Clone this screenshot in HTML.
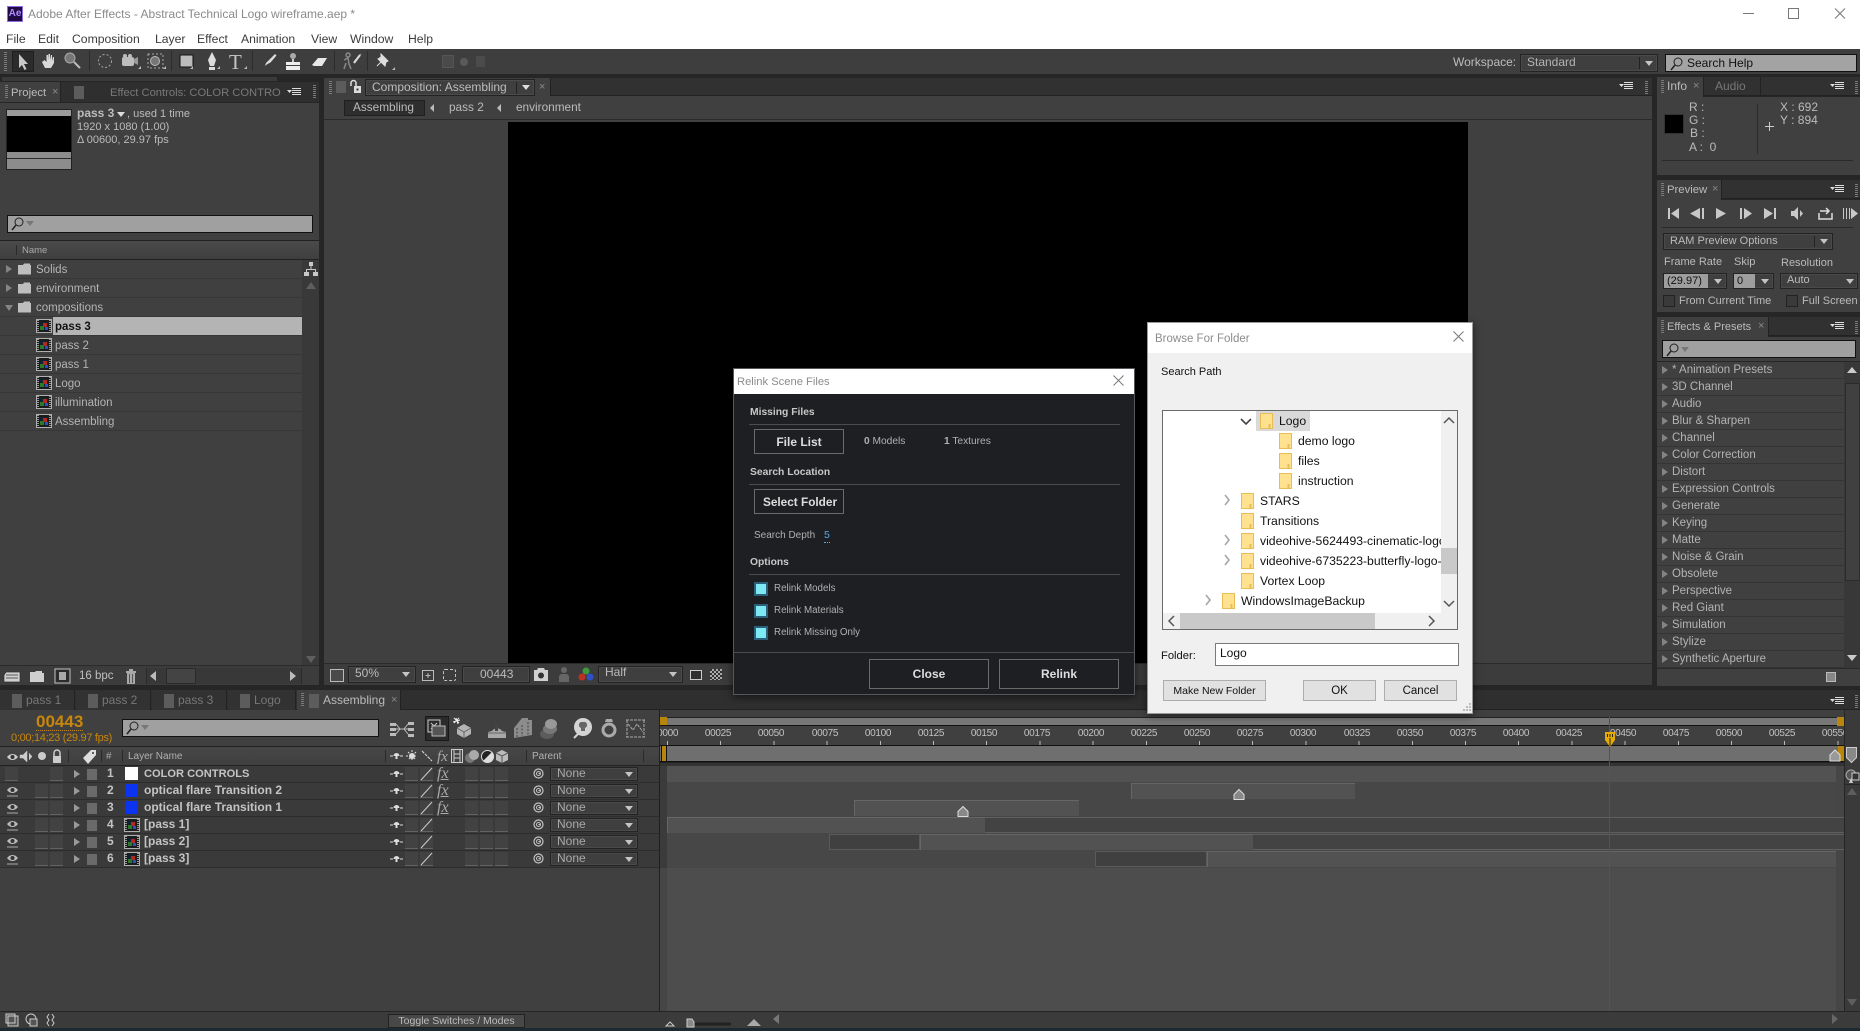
<!DOCTYPE html>
<html lang="en"><head><meta charset="utf-8"><title>Adobe After Effects</title>
<style>
*{box-sizing:border-box}
html,body{margin:0;padding:0}
body{position:relative;width:1860px;height:1031px;overflow:hidden;background:#262626;font:12px/14px "Liberation Sans",sans-serif;color:#b4b4b4}
.a{position:absolute}
.t{position:absolute;white-space:nowrap;line-height:14px}
.r{position:absolute;width:0;height:0;border-style:solid;border-width:4px 0 4px 6px;border-color:transparent transparent transparent #848484}
.d{position:absolute;width:0;height:0;border-style:solid;border-width:5px 4px 0;border-color:#c4c4c4 transparent transparent}
.g{position:absolute;width:3px;height:14px;background:repeating-linear-gradient(#7a7a7a 0 1px,transparent 1px 2px)}
.dd{position:absolute;background:#3f3f3f;border:1px solid #232323;outline:1px solid #4a4a4a;outline-offset:-2px}
.sp{position:absolute;width:1px;background:#2a2a2a}
.rw{position:absolute;left:0;width:302px;height:19px;background:#404040;border-bottom:1px solid #363636}
.rw + .r + svg + .t,.rw + .d + svg + .t,.rw + svg + .t{font-size:11.5px;margin-top:1px}
.er{position:absolute;left:1657px;width:187px;height:17px;background:#404040;border-bottom:1px solid #343434}
.er + .r + .t{font-size:11.5px;margin-top:1px}
.lr{position:absolute;left:0;width:660px;height:17px;background:#3a3a3a;border-bottom:1px solid #2d2d2d}
.b{position:absolute;width:13px;height:14px;background:#424242;border-bottom:1px solid #626262}
.lb{position:absolute;left:87px;width:10px;height:11px;background:#6a6a6a}
.n{font-weight:bold;color:#c4c4c4}
.fx{position:absolute;white-space:nowrap;line-height:14px;left:437px;font-family:'Liberation Serif',serif;font-style:italic;font-size:16px;color:#aaa;text-decoration:underline}
.tab{position:absolute;top:690px;height:20px;background:#323232;border-right:1px solid #222}
.sq{position:absolute;width:10px;height:14px;background:#5c5c5c}
.tl{position:absolute;top:727px;width:40px;text-align:center;font-size:10px;letter-spacing:-.3px;line-height:14px;color:#c2c2c2}
.tr{position:absolute;left:667px;width:1169px;height:16px}
.btn{position:absolute;border:1px solid #6a6a6a;color:#ddd;font-weight:bold;text-align:center;background:#1e1f22}
.wb{position:absolute;background:#e1e1e1;border:1px solid #adadad;text-align:center;color:#111;font-size:11.5px;line-height:21px}
.fr{position:absolute;white-space:nowrap;color:#111;font-size:12.2px;line-height:20px}
.h{font-size:10.3px;font-weight:bold;color:#c8c8c8;margin-top:1px}
.o{font-size:9.8px;color:#b0b0b0;margin-top:1px}
.s{font-size:11px;margin-top:1px}
svg{position:absolute;overflow:visible}
</style></head><body>
<svg width="0" height="0" style="left:0;top:0"><defs>
<symbol id="comp" viewBox="0 0 16 14"><rect x=".5" y=".5" width="15" height="13" fill="#1c1c1c" stroke="#b0b0b0"/><path d="M2 1v12M14 1v12" stroke="#999" stroke-width="2" stroke-dasharray="1 1"/><rect x="4" y="3" width="8" height="8" fill="#123"/><rect x="4" y="7" width="4" height="4" fill="#2a7a2a"/><rect x="7" y="4" width="4" height="4" fill="#b02a1a"/><rect x="9" y="8" width="3" height="3" fill="#2a50c0"/></symbol>
<symbol id="fold" viewBox="0 0 14 12"><path d="M0 2h5l1-1.500h6v1.500h1v9.500h-13z" fill="#bdbdbd"/></symbol>
<symbol id="wf" viewBox="0 0 13 16"><path d="M.5.500h12v15h-12z" fill="#ffe18f" stroke="#e9bd55"/><path d="M9.500 11v4.500" stroke="#e9bd55" stroke-width="2"/></symbol>
<symbol id="mn" viewBox="0 0 14 8"><path d="M0 2h5l-2.500 3z" fill="#ddd"/><path d="M5 .5h9M5 2.500h9M5 4.500h9M5 6.500h9" stroke="#ddd"/></symbol>
<symbol id="eye" viewBox="0 0 13 12"><path d="M1 5c3-4 8-4 11 0-3 4-8 4-11 0z" fill="#bbb"/><circle cx="6.500" cy="5" r="2" fill="#333"/><path d="M1 11h11" stroke="#aaa"/></symbol>
<symbol id="shy" viewBox="0 0 13 10"><path d="M0 5h3M10 5h3" stroke="#ddd"/><path d="M3.500 5a3 3 0 0 1 6 0z" fill="#ddd"/><path d="M5.500 5v3h2v-3" fill="#ddd"/></symbol>
<symbol id="sps" viewBox="0 0 11 11"><circle cx="5.500" cy="5.500" r="4.500" fill="none" stroke="#c4c4c4" stroke-width="1.200"/><circle cx="5.500" cy="5.500" r="2" fill="none" stroke="#c4c4c4"/><path d="M5.500 5.500h2" stroke="#c4c4c4"/></symbol>
</defs></svg>

<!-- title bar -->
<div class="a" style="left:0;top:0;width:1860px;height:49px;background:#fff"></div>
<div class="a" style="left:7px;top:6px;width:16px;height:16px;background:#1f0a45;border:1px solid #8d6fe0;color:#b18cff;font-weight:bold;font-size:10px;line-height:14px;text-align:center">Ae</div>
<div class="t" style="left:28px;top:7px;color:#8a8a8a;font-size:12px">Adobe After Effects - Abstract Technical Logo wireframe.aep *</div>
<div class="t" style="left:6px;top:32px;color:#3c3c3c;font-size:12.2px">File</div>
<div class="t" style="left:38px;top:32px;color:#3c3c3c;font-size:12.2px">Edit</div>
<div class="t" style="left:72px;top:32px;color:#3c3c3c;font-size:12.2px">Composition</div>
<div class="t" style="left:155px;top:32px;color:#3c3c3c;font-size:12.2px">Layer</div>
<div class="t" style="left:197px;top:32px;color:#3c3c3c;font-size:12.2px">Effect</div>
<div class="t" style="left:241px;top:32px;color:#3c3c3c;font-size:12.2px">Animation</div>
<div class="t" style="left:311px;top:32px;color:#3c3c3c;font-size:12.2px">View</div>
<div class="t" style="left:350px;top:32px;color:#3c3c3c;font-size:12.2px">Window</div>
<div class="t" style="left:408px;top:32px;color:#3c3c3c;font-size:12.2px">Help</div>
<svg width="110" height="16" style="left:1743px;top:6px"><path d="M0 7.500h11M45.500 2.500h10v10h-10zM92 2.500l10 10M102 2.500l-10 10" fill="none" stroke="#777"/></svg>

<!-- toolbar -->
<div class="a" style="left:0;top:49px;width:1860px;height:25px;background:#3e3e3e"></div>
<div class="g" style="left:4px;top:52px;height:20px"></div>
<div class="a" style="left:12px;top:51px;width:22px;height:21px;background:#2b2b2b;border:1px solid #1f1f1f"></div>
<svg width="400" height="26" style="left:0;top:49px">
<path d="M19 5v14l3-3 2.500 5 2-1-2.500-5h4z" fill="#c8c8c8"/>
<path d="M42 13l3 6h6l3-5v-6l-1 0-1 4v-6h-1l-1 5v-6h-1.500l-.5 6v-5h-1.500v7l-2-2z" fill="#d8d8d8"/>
<circle cx="70" cy="9" r="5" fill="#777" stroke="#aaa"/><path d="M74 13l6 6" stroke="#bbb" stroke-width="2"/>
<circle cx="105" cy="12" r="6.500" fill="none" stroke="#aaa" stroke-dasharray="2 2"/>
<rect x="122" y="8" width="12" height="9" rx="2" fill="#bdbdbd"/><circle cx="125" cy="7" r="2" fill="#bdbdbd"/><circle cx="130" cy="7" r="2" fill="#bdbdbd"/><path d="M134 10l4-2v8l-4-2z" fill="#999"/>
<rect x="148" y="5" width="15" height="14" fill="none" stroke="#aaa" stroke-dasharray="2 2"/><circle cx="155" cy="12" r="4.500" fill="#777" stroke="#bbb"/>
<rect x="180" y="6" width="13" height="12" fill="#bbb" stroke="#111"/>
<path d="M212 3l4 8-2 6h-4l-2-6z" fill="#ddd"/><rect x="209" y="18" width="6" height="3" fill="#ddd"/>
<text x="229" y="20" font-family="Liberation Serif" font-size="21" fill="#c4c4c4">T</text>
<path d="M275 5l1.500 1.500-6 7-3 1.500-2.500 2 1-3 2-2z" fill="#ddd"/>
<circle cx="293" cy="7" r="3" fill="#aaa"/><path d="M292 10h2v3h-2z" fill="#ccc"/><path d="M286 13h14v3h-14zM286 17h14v4h-14z" fill="#eee"/>
<path d="M312 16l6-7h9l-5 8h-8z" fill="#e8e8e8"/>
<path d="M346 6a2 2 0 1 1 0 .1M344 11l4-2 1 6 2 5M346 14l-2 6M354 13l7-8" stroke="#888" stroke-width="1.500" fill="none"/><path d="M354 14l6-8" stroke="#ddd" stroke-width="2"/>
<path d="M377 17l5-5M381 5l7 7-2 1-1 4-7-7 3-2z" stroke="#ddd" fill="#ddd"/>
<path d="M190 20h3v-3zM217 20h3v-3zM244 20h3v-3zM138 20h3v-3zM163 20h3v-3zM392 21h3v-3z" fill="#bbb"/>
<path d="M89.500 2v20M171.500 2v20M252.500 2v20M334.500 2v20M367.500 2v20" stroke="#2c2c2c"/>
</svg>
<div class="a" style="left:442px;top:55px;width:12px;height:13px;background:#4a4a4a;border:1px solid #555"></div>
<div class="a" style="left:460px;top:58px;width:8px;height:8px;background:#5a5a5a;border-radius:50%"></div>
<div class="a" style="left:476px;top:56px;width:9px;height:11px;background:#4b4b4b"></div>
<div class="t" style="left:1453px;top:55px;color:#bdbdbd">Workspace:</div>
<div class="dd" style="left:1520px;top:54px;width:138px;height:18px"></div>
<div class="t" style="left:1527px;top:55px;color:#b4b4b4">Standard</div>
<div class="sp" style="left:1639px;top:57px;height:12px;background:#222"></div>
<div class="d" style="left:1645px;top:61px"></div>
<div class="a" style="left:1665px;top:54px;width:192px;height:18px;background:#a3a3a3;border:1px solid #111"></div>
<svg width="14" height="14" style="left:1670px;top:57px"><circle cx="8" cy="5" r="4" fill="none" stroke="#222"/><path d="M5 8l-4 5" stroke="#222" stroke-width="1.500"/></svg>
<div class="t" style="left:1687px;top:56px;color:#111">Search Help</div>

<!-- project panel -->
<div class="a" style="left:2px;top:77px;width:275px;height:4px;background:#3a3a3a"></div>
<div class="a" style="left:0;top:82px;width:319px;height:20px;background:#2f2f2f"></div>
<div class="a" style="left:0;top:82px;width:61px;height:20px;background:#404040;border-right:1px solid #222"></div>
<div class="g" style="left:5px;top:85px"></div>
<div class="t" style="left:11px;top:86px;color:#bbb;font-size:11.3px">Project</div>
<div class="t" style="left:52px;top:85px;font-size:11px;color:#888">×</div>
<div class="sq" style="left:74px;top:86px;width:10px;height:13px"></div>
<div class="t" style="left:110px;top:86px;width:171px;overflow:hidden;color:#787878;font-size:11.2px">Effect Controls: COLOR CONTROLS</div>
<svg width="14" height="8" style="left:287px;top:88px"><use href="#mn"/></svg>
<div class="g" style="left:313px;top:85px"></div>
<div class="a" style="left:0;top:102px;width:319px;height:583px;background:#404040;border-top:1px solid #262626"></div>
<div class="a" style="left:6px;top:109px;width:66px;height:61px;background:#2a2a2a;border:1px solid #222"></div>
<div class="a" style="left:7px;top:110px;width:64px;height:6px;background:#9a9a9a"></div>
<div class="a" style="left:7px;top:116px;width:64px;height:36px;background:#000"></div>
<div class="a" style="left:7px;top:152px;width:64px;height:6px;background:#8c8c8c"></div>
<div class="a" style="left:7px;top:159px;width:64px;height:10px;background:#8c8c8c"></div>
<div class="t" style="left:77px;top:106px;color:#bbb"><b>pass 3</b></div>
<div class="d" style="left:117px;top:112px;border-top-color:#ddd"></div>
<div class="t s" style="left:127px;top:106px;color:#bbb">, used 1 time</div>
<div class="t s" style="left:77px;top:119px;color:#bbb">1920 x 1080 (1.00)</div>
<div class="t s" style="left:77px;top:132px;color:#bbb">Δ 00600, 29.97 fps</div>
<div class="a" style="left:7px;top:215px;width:306px;height:18px;background:#a0a0a0;border:1px solid #111"></div>
<svg width="24" height="14" style="left:11px;top:217px"><circle cx="8" cy="5" r="4" fill="none" stroke="#222"/><path d="M5 8l-4 5" stroke="#222" stroke-width="1.500"/><path d="M15 4h8l-4 5z" fill="#777"/></svg>
<div class="a" style="left:0;top:240px;width:319px;height:1px;background:#222"></div>
<div class="a" style="left:0;top:241px;width:319px;height:18px;background:linear-gradient(#4a4a4a,#3f3f3f)"></div>
<div class="sp" style="left:16px;top:245px;height:10px;background:#2a2a2a"></div>
<div class="t" style="left:22px;top:244px;font-size:9.5px;color:#aaa">Name</div>
<div class="a" style="left:0;top:259px;width:319px;height:1px;background:#222"></div>
<div class="rw" style="top:260px"></div><div class="r" style="left:6px;top:265px"></div>
<svg width="14" height="12" style="left:18px;top:263px"><use href="#fold"/></svg><div class="t" style="left:36px;top:262px">Solids</div>
<div class="rw" style="top:279px"></div><div class="r" style="left:6px;top:284px"></div>
<svg width="14" height="12" style="left:18px;top:282px"><use href="#fold"/></svg><div class="t" style="left:36px;top:281px">environment</div>
<div class="rw" style="top:298px"></div><div class="d" style="left:5px;top:305px;border-width:6px 4px 0;border-top-color:#848484"></div>
<svg width="14" height="12" style="left:18px;top:301px"><use href="#fold"/></svg><div class="t" style="left:36px;top:300px">compositions</div>
<div class="rw" style="top:317px"></div><div class="a" style="left:53px;top:317px;width:249px;height:18px;background:#b4b4b4"></div>
<svg width="16" height="14" style="left:36px;top:319px"><use href="#comp"/></svg><div class="t" style="left:55px;top:320px;color:#111;font-weight:bold;font-size:11.5px">pass 3</div>
<div class="rw" style="top:336px"></div><svg width="16" height="14" style="left:36px;top:338px"><use href="#comp"/></svg><div class="t" style="left:55px;top:338px">pass 2</div>
<div class="rw" style="top:355px"></div><svg width="16" height="14" style="left:36px;top:357px"><use href="#comp"/></svg><div class="t" style="left:55px;top:357px">pass 1</div>
<div class="rw" style="top:374px"></div><svg width="16" height="14" style="left:36px;top:376px"><use href="#comp"/></svg><div class="t" style="left:55px;top:376px">Logo</div>
<div class="rw" style="top:393px"></div><svg width="16" height="14" style="left:36px;top:395px"><use href="#comp"/></svg><div class="t" style="left:55px;top:395px">illumination</div>
<div class="rw" style="top:412px"></div><svg width="16" height="14" style="left:36px;top:414px"><use href="#comp"/></svg><div class="t" style="left:55px;top:414px">Assembling</div>
<div class="a" style="left:302px;top:260px;width:17px;height:405px;background:#393939"></div>
<svg width="14" height="16" style="left:304px;top:262px"><path d="M5 0h4v4h-4zM6.500 4h1v3h-1zM2 7h10v1h-10zM2 8h1v2h-1zM11 8h1v2h-1zM0 10h5v4h-5zM9 10h5v4h-5z" fill="#c8c8c8"/></svg>
<div class="a" style="left:306px;top:282px;width:0;height:0;border:5px solid transparent;border-bottom:7px solid #5e5e5e;border-top:0"></div>
<div class="d" style="left:306px;top:656px;border-width:7px 5px 0;border-top-color:#5e5e5e"></div>
<div class="a" style="left:0;top:665px;width:319px;height:20px;background:#3c3c3c;border-top:1px solid #2b2b2b"></div>
<svg width="70" height="16" style="left:4px;top:668px"><path d="M2 4h14v10h-16v-7zM2 7h12M2 10h12" stroke="#333" fill="#cfcfcf" stroke-width=".7"/><path d="M26 4h5l1-1h6v2h2v9h-14z" fill="#cfcfcf"/><rect x="51" y="1" width="15" height="14" fill="#2d2d2d" stroke="#c4c4c4"/><rect x="55" y="4" width="7" height="8" fill="#aaa"/></svg>
<div class="t" style="left:79px;top:669px;color:#c0c0c0;font-size:11.5px">16 bpc</div>
<svg width="12" height="16" style="left:125px;top:668px"><path d="M1 3h10v2h-10zM4 1h4v2h-4zM2 5h8v11h-8z" fill="#a8a8a8"/><path d="M4.500 6v9M7.500 6v9" stroke="#555"/></svg>
<div class="a" style="left:146px;top:668px;width:156px;height:16px;background:#383838;border-left:1px solid #2a2a2a;border-right:1px solid #2a2a2a"></div>
<div class="a" style="left:166px;top:668px;width:30px;height:16px;background:#444;border:1px solid #2a2a2a"></div>
<div class="a" style="left:150px;top:671px;border:5px solid transparent;border-right:6px solid #bbb;border-left:0"></div>
<div class="r" style="left:290px;top:671px;border-width:5px 0 5px 6px;border-left-color:#bbb"></div>

<!-- composition panel -->
<div class="a" style="left:324px;top:78px;width:1328px;height:18px;background:#404040"></div>
<div class="a" style="left:550px;top:78px;width:1102px;height:18px;background:#313131;border-bottom:1px solid #222;border-left:1px solid #222"></div>
<div class="g" style="left:329px;top:81px"></div>
<div class="sq" style="left:336px;top:81px;height:12px"></div>
<svg width="12" height="14" style="left:350px;top:80px"><path d="M1 6v-3a2.500 2.500 0 0 1 5 0v3" fill="none" stroke="#ddd" stroke-width="1.500"/><rect x="4" y="6" width="7" height="7" fill="#ddd"/><rect x="6.500" y="8.500" width="2" height="2" fill="#333"/></svg>
<div class="dd" style="left:365px;top:79px;width:170px;height:17px"></div>
<div class="t" style="left:372px;top:80px;color:#bdbdbd">Composition: Assembling</div>
<div class="sp" style="left:516px;top:82px;height:12px;background:#222"></div>
<div class="d" style="left:522px;top:85px;border-top-color:#ddd"></div>
<div class="t" style="left:539px;top:80px;font-size:11px;color:#888">×</div>
<svg width="14" height="8" style="left:1619px;top:82px"><use href="#mn"/></svg>
<div class="g" style="left:1645px;top:81px"></div>
<div class="a" style="left:324px;top:96px;width:1328px;height:24px;background:#404040;border-bottom:1px solid #2b2b2b"></div>
<div class="a" style="left:344px;top:100px;width:81px;height:16px;background:#2e2e2e;border:1px solid #202020"></div>
<div class="t" style="left:353px;top:100px;color:#bbb;font-size:11.8px">Assembling</div>
<div class="a" style="left:430px;top:104px;border:4px solid transparent;border-right:4px solid #bbb;border-left:0"></div>
<div class="t" style="left:449px;top:100px;color:#bbb;font-size:11.8px">pass 2</div>
<div class="a" style="left:497px;top:104px;border:4px solid transparent;border-right:4px solid #bbb;border-left:0"></div>
<div class="t" style="left:516px;top:100px;color:#bbb;font-size:11.8px">environment</div>
<div class="a" style="left:324px;top:120px;width:1328px;height:544px;background:#404040"></div>
<div class="a" style="left:508px;top:122px;width:960px;height:541px;background:#000"></div>
<div class="a" style="left:324px;top:663px;width:1328px;height:22px;background:#3c3c3c;border-top:1px solid #2b2b2b"></div>
<div class="a" style="left:330px;top:669px;width:14px;height:13px;border:1px solid #bbb;background:#4a4a4a"></div>
<div class="dd" style="left:348px;top:666px;width:68px;height:17px"></div>
<div class="t" style="left:355px;top:666px;color:#bbb">50%</div>
<div class="d" style="left:402px;top:672px"></div>
<svg width="14" height="14" style="left:421px;top:668px"><path d="M1.500 2.500h11v10h-11zM7 5v5M4.500 7.500h5" fill="none" stroke="#bbb"/></svg>
<div class="a" style="left:443px;top:669px;width:13px;height:12px;border:1px dashed #c4c4c4;border-radius:2px"></div>
<div class="dd" style="left:462px;top:666px;width:68px;height:17px"></div>
<div class="t" style="left:480px;top:667px;color:#bbb">00443</div>
<svg width="70" height="16" style="left:534px;top:667px"><path d="M0 3h3l1-2h6l1 2h3v11h-14z" fill="#d0d0d0"/><circle cx="7" cy="8.500" r="3" fill="#333"/><circle cx="30" cy="3" r="3" fill="#666"/><path d="M25 15v-5a3 3 0 0 1 3-3h4a3 3 0 0 1 3 3v5z" fill="#666"/><circle cx="52" cy="4" r="3.500" fill="#3c9a3c"/><circle cx="48" cy="10" r="3.500" fill="#c03020"/><circle cx="56" cy="10" r="3.500" fill="#3050c8"/></svg>
<div class="dd" style="left:598px;top:666px;width:85px;height:17px"></div>
<div class="t" style="left:605px;top:665px;color:#bbb">Half</div>
<div class="d" style="left:669px;top:672px"></div>
<div class="a" style="left:690px;top:670px;width:12px;height:10px;border:1px solid #ccc;background:#2f2f2f"></div>
<div class="a" style="left:710px;top:669px;width:12px;height:11px;background:repeating-conic-gradient(#aaa 0 25%,#333 0 50%) 0 0/4px 4px"></div>

<!-- info panel -->
<div class="a" style="left:1657px;top:77px;width:203px;height:19px;background:#313131;border-bottom:1px solid #222"></div>
<div class="a" style="left:1657px;top:77px;width:47px;height:20px;background:#404040;border-right:1px solid #222"></div>
<div class="g" style="left:1661px;top:80px"></div>
<div class="t" style="left:1667px;top:79px;color:#bbb">Info</div>
<div class="t" style="left:1693px;top:79px;font-size:11px;color:#888">×</div>
<div class="t" style="left:1715px;top:79px;color:#777">Audio</div>
<div class="sp" style="left:1760px;top:77px;height:19px;background:#222"></div>
<svg width="14" height="8" style="left:1830px;top:82px"><use href="#mn"/></svg>
<div class="g" style="left:1855px;top:81px"></div>
<div class="a" style="left:1657px;top:97px;width:203px;height:78px;background:#404040"></div>
<div class="a" style="left:1664px;top:114px;width:20px;height:20px;background:#000;border:1px solid #333"></div>
<div class="t" style="left:1689px;top:100px;color:#bbb">R :</div>
<div class="t" style="left:1689px;top:113px;color:#bbb">G :</div>
<div class="t" style="left:1690px;top:126px;color:#bbb">B :</div>
<div class="t" style="left:1689px;top:140px;color:#bbb">A :&nbsp; 0</div>
<div class="sp" style="left:1757px;top:104px;height:50px;background:#2a2a2a"></div>
<svg width="10" height="10" style="left:1765px;top:122px"><path d="M0 4.500h9M4.500 0v9" stroke="#ccc"/></svg>
<div class="t" style="left:1780px;top:100px;color:#bbb">X : 692</div>
<div class="t" style="left:1780px;top:113px;color:#bbb">Y : 894</div>
<div class="a" style="left:1662px;top:160px;width:191px;height:1px;background:#2a2a2a"></div>

<!-- preview panel -->
<div class="a" style="left:1657px;top:180px;width:203px;height:19px;background:#313131;border-bottom:1px solid #222"></div>
<div class="a" style="left:1657px;top:180px;width:65px;height:20px;background:#404040;border-right:1px solid #222"></div>
<div class="g" style="left:1661px;top:183px"></div>
<div class="t" style="left:1667px;top:183px;color:#bbb;font-size:11.3px">Preview</div>
<div class="t" style="left:1712px;top:182px;font-size:11px;color:#888">×</div>
<svg width="14" height="8" style="left:1830px;top:185px"><use href="#mn"/></svg>
<div class="g" style="left:1855px;top:184px"></div>
<div class="a" style="left:1657px;top:200px;width:203px;height:112px;background:#404040"></div>
<svg width="196" height="14" style="left:1667px;top:207px"><path d="M1 1h2v11h-2zM12 1v11l-8-5.500zM33 1v11l-10-5.500zM35 1h2v11h-2zM49 1l10 5.500-10 5.500zM73 1h2v11h-2zM77 1l8 5.500-8 5.500zM97 1l9 5.500-9 5.500zM107 1h2v11h-2zM124 4h3l4-4v13l-4-4h-3zM133 3l3 3.500-3 3.500z" fill="#c8c8c8"/><path d="M152 6v6h13v-6M153 4h9M159 1l3 3-3 3" stroke="#ddd" stroke-width="1.500" fill="none"/><path d="M176.500 1v11M179.500 1v11M182.500 1v11" stroke="#c8c8c8"/><path d="M184 1l7 5.500-7 5.500z" fill="#c8c8c8"/></svg>
<div class="a" style="left:1662px;top:227px;width:191px;height:1px;background:#2a2a2a"></div>
<div class="dd" style="left:1663px;top:233px;width:170px;height:17px"></div>
<div class="t s" style="left:1670px;top:233px;color:#bbb">RAM Preview Options</div>
<div class="sp" style="left:1814px;top:236px;height:11px;background:#222"></div>
<div class="d" style="left:1820px;top:239px"></div>
<div class="t s" style="left:1664px;top:254px;color:#bbb">Frame Rate</div>
<div class="t s" style="left:1734px;top:254px;color:#bbb">Skip</div>
<div class="t s" style="left:1781px;top:255px;color:#bbb">Resolution</div>
<div class="dd" style="left:1663px;top:273px;width:64px;height:16px"></div>
<div class="a" style="left:1664px;top:274px;width:44px;height:14px;background:#9e9e9e"></div>
<div class="t s" style="left:1667px;top:273px;color:#111">(29.97)</div>
<div class="d" style="left:1714px;top:279px"></div>
<div class="dd" style="left:1733px;top:273px;width:41px;height:16px"></div>
<div class="a" style="left:1734px;top:274px;width:21px;height:14px;background:#9e9e9e"></div>
<div class="t s" style="left:1737px;top:273px;color:#111">0</div>
<div class="d" style="left:1761px;top:279px"></div>
<div class="dd" style="left:1780px;top:273px;width:78px;height:16px"></div>
<div class="t s" style="left:1787px;top:272px;color:#bbb">Auto</div>
<div class="d" style="left:1846px;top:279px"></div>
<div class="a" style="left:1663px;top:295px;width:12px;height:12px;background:#3a3a3a;border:1px solid #222"></div>
<div class="t s" style="left:1679px;top:293px;color:#bbb">From Current Time</div>
<div class="a" style="left:1786px;top:295px;width:12px;height:12px;background:#3a3a3a;border:1px solid #222"></div>
<div class="t s" style="left:1802px;top:293px;color:#bbb">Full Screen</div>

<!-- effects panel -->
<div class="a" style="left:1657px;top:317px;width:203px;height:19px;background:#313131;border-bottom:1px solid #222"></div>
<div class="a" style="left:1657px;top:317px;width:112px;height:20px;background:#404040;border-right:1px solid #222"></div>
<div class="g" style="left:1661px;top:320px"></div>
<div class="t s" style="left:1667px;top:319px;color:#bbb">Effects &amp; Presets</div>
<div class="t" style="left:1758px;top:319px;font-size:11px;color:#888">×</div>
<svg width="14" height="8" style="left:1830px;top:322px"><use href="#mn"/></svg>
<div class="g" style="left:1855px;top:321px"></div>
<div class="a" style="left:1657px;top:337px;width:203px;height:349px;background:#404040"></div>
<div class="a" style="left:1662px;top:340px;width:194px;height:18px;background:#a0a0a0;border:1px solid #111"></div>
<svg width="24" height="14" style="left:1666px;top:343px"><circle cx="8" cy="5" r="4" fill="none" stroke="#222"/><path d="M5 8l-4 5" stroke="#222" stroke-width="1.500"/><path d="M15 4h8l-4 5z" fill="#777"/></svg>
<div class="a" style="left:1657px;top:361px;width:203px;height:1px;background:#262626"></div>
<div class="er" style="top:362px"></div><div class="r" style="left:1662px;top:366px"></div><div class="t" style="left:1672px;top:362px">* Animation Presets</div>
<div class="er" style="top:379px"></div><div class="r" style="left:1662px;top:383px"></div><div class="t" style="left:1672px;top:379px">3D Channel</div>
<div class="er" style="top:396px"></div><div class="r" style="left:1662px;top:400px"></div><div class="t" style="left:1672px;top:396px">Audio</div>
<div class="er" style="top:413px"></div><div class="r" style="left:1662px;top:417px"></div><div class="t" style="left:1672px;top:413px">Blur &amp; Sharpen</div>
<div class="er" style="top:430px"></div><div class="r" style="left:1662px;top:434px"></div><div class="t" style="left:1672px;top:430px">Channel</div>
<div class="er" style="top:447px"></div><div class="r" style="left:1662px;top:451px"></div><div class="t" style="left:1672px;top:447px">Color Correction</div>
<div class="er" style="top:464px"></div><div class="r" style="left:1662px;top:468px"></div><div class="t" style="left:1672px;top:464px">Distort</div>
<div class="er" style="top:481px"></div><div class="r" style="left:1662px;top:485px"></div><div class="t" style="left:1672px;top:481px">Expression Controls</div>
<div class="er" style="top:498px"></div><div class="r" style="left:1662px;top:502px"></div><div class="t" style="left:1672px;top:498px">Generate</div>
<div class="er" style="top:515px"></div><div class="r" style="left:1662px;top:519px"></div><div class="t" style="left:1672px;top:515px">Keying</div>
<div class="er" style="top:532px"></div><div class="r" style="left:1662px;top:536px"></div><div class="t" style="left:1672px;top:532px">Matte</div>
<div class="er" style="top:549px"></div><div class="r" style="left:1662px;top:553px"></div><div class="t" style="left:1672px;top:549px">Noise &amp; Grain</div>
<div class="er" style="top:566px"></div><div class="r" style="left:1662px;top:570px"></div><div class="t" style="left:1672px;top:566px">Obsolete</div>
<div class="er" style="top:583px"></div><div class="r" style="left:1662px;top:587px"></div><div class="t" style="left:1672px;top:583px">Perspective</div>
<div class="er" style="top:600px"></div><div class="r" style="left:1662px;top:604px"></div><div class="t" style="left:1672px;top:600px">Red Giant</div>
<div class="er" style="top:617px"></div><div class="r" style="left:1662px;top:621px"></div><div class="t" style="left:1672px;top:617px">Simulation</div>
<div class="er" style="top:634px"></div><div class="r" style="left:1662px;top:638px"></div><div class="t" style="left:1672px;top:634px">Stylize</div>
<div class="er" style="top:651px"></div><div class="r" style="left:1662px;top:655px"></div><div class="t" style="left:1672px;top:651px">Synthetic Aperture</div>
<div class="a" style="left:1844px;top:362px;width:16px;height:306px;background:#383838"></div>
<div class="a" style="left:1845px;top:383px;width:15px;height:198px;background:#404040;border:1px solid #2b2b2b"></div>
<div class="a" style="left:1847px;top:367px;border:5px solid transparent;border-bottom:6px solid #ccc;border-top:0"></div>
<div class="d" style="left:1847px;top:655px;border-width:6px 5px 0;border-top-color:#ccc"></div>
<div class="a" style="left:1657px;top:668px;width:203px;height:1px;background:#2a2a2a"></div>
<div class="a" style="left:1826px;top:672px;width:10px;height:10px;background:#888;border:1px solid #bbb"></div>

<!-- timeline -->
<div class="a" style="left:0;top:690px;width:1860px;height:20px;background:#2f2f2f;border-bottom:1px solid #222"></div>
<div class="tab" style="left:0;width:75px"></div><div class="sq" style="left:12px;top:694px"></div><div class="t" style="left:26px;top:693px;color:#777">pass 1</div>
<div class="tab" style="left:76px;width:75px"></div><div class="sq" style="left:88px;top:694px"></div><div class="t" style="left:102px;top:693px;color:#777">pass 2</div>
<div class="tab" style="left:152px;width:75px"></div><div class="sq" style="left:164px;top:694px"></div><div class="t" style="left:178px;top:693px;color:#777">pass 3</div>
<div class="tab" style="left:228px;width:68px"></div><div class="sq" style="left:240px;top:694px"></div><div class="t" style="left:254px;top:693px;color:#777">Logo</div>
<div class="tab" style="left:297px;width:104px;height:21px;background:#404040"></div><div class="g" style="left:301px;top:693px"></div><div class="sq" style="left:309px;top:694px"></div><div class="t" style="left:323px;top:693px;color:#bbb">Assembling</div><div class="t" style="left:391px;top:693px;font-size:11px;color:#888">×</div>
<svg width="14" height="8" style="left:1830px;top:697px"><use href="#mn"/></svg>
<div class="g" style="left:1855px;top:695px"></div>
<div class="a" style="left:0;top:710px;width:1860px;height:37px;background:#404040"></div>
<div class="t" style="left:36px;top:715px;color:#c8860a;font-weight:bold;font-size:17px">00443</div>
<div class="a" style="left:36px;top:730px;width:48px;height:1px;background:repeating-linear-gradient(90deg,#c8860a 0 1px,transparent 1px 2px)"></div>
<div class="t" style="left:11px;top:731px;color:#c8860a;font-size:11px;letter-spacing:-.3px">0;00;14;23 (29.97 fps)</div>
<div class="a" style="left:122px;top:719px;width:257px;height:18px;background:#a0a0a0;border:1px solid #111"></div>
<svg width="24" height="14" style="left:126px;top:721px"><circle cx="8" cy="5" r="4" fill="none" stroke="#222"/><path d="M5 8l-4 5" stroke="#222" stroke-width="1.500"/><path d="M15 4h8l-4 5z" fill="#777"/></svg>
<div class="a" style="left:425px;top:716px;width:24px;height:25px;background:#2b2b2b;border:1px solid #191919"></div>
<svg width="260" height="30" style="left:390px;top:714px">
<path d="M0 9h6v3h-6zM0 14h6v3h-6zM0 19h6v3h-6zM18 8h6v3h-6zM18 14h6v3h-6zM18 20h6v3h-6z" fill="#bbb"/><path d="M6 15h12M6 10l4 5-4 5M18 10l-4 5 4 5" stroke="#bbb" fill="none"/>
<rect x="38" y="6" width="12" height="12" fill="none" stroke="#ccc"/><path d="M41 9l6 6M47 9l-6 6" stroke="#ccc"/><rect x="42" y="12" width="13" height="10" fill="#555" stroke="#bbb"/>
<path d="M66 4l2 6M63 8l7-2M64 4l5 5M69 4l-5 5" stroke="#eee"/><path d="M74 10l7 4v6l-7 4-7-4v-6z" fill="#b4b4b4"/><path d="M67 14l7 4 7-4M74 18v6" stroke="#666" fill="none"/>
<path d="M98 24v-6l4-1a6 6 0 0 1 10 0l4 1v6z" fill="#a8a8a8"/><path d="M105 11h3v6h-3z" fill="#444"/><path d="M98 19h18" stroke="#666"/>
<path d="M124 14v10l18-3v-15l-4 0v-2h-6z" fill="#8c8c8c"/><path d="M127 14v9M132 11v11M138 8v13" stroke="#444" stroke-dasharray="2 1.500"/>
<ellipse cx="157" cy="20" rx="7" ry="5" fill="#5c5c5c"/><ellipse cx="160" cy="15" rx="7" ry="5" fill="#777"/><ellipse cx="161" cy="10" rx="6" ry="5" fill="#999"/>
<circle cx="193" cy="13" r="9" fill="#d4d4d4"/><path d="M188 20l-4 4" stroke="#d4d4d4" stroke-width="2"/><path d="M193 8a3 3 0 0 0-2 6v3h4v-3a3 3 0 0 0-2-6z" fill="#666"/>
<circle cx="219" cy="16" r="6" fill="none" stroke="#aaa" stroke-width="3"/><path d="M216 5h6l1 3h-8z" fill="#aaa"/>
<path d="M236 6h19M236 23h19M237 6v17M254 6v17M238 10l5 6 4-6 6 8" fill="none" stroke="#aaa" stroke-dasharray="3 1"/>
</svg>
<div class="a" style="left:0;top:746px;width:660px;height:1px;background:#222"></div>
<div class="a" style="left:0;top:747px;width:660px;height:18px;background:linear-gradient(#474747,#3f3f3f)"></div>
<div class="a" style="left:0;top:765px;width:660px;height:1px;background:#222"></div>
<svg width="13" height="12" style="left:6px;top:752px"><path d="M1 5c3-4 8-4 11 0-3 4-8 4-11 0z" fill="#ccc"/><circle cx="6.500" cy="5" r="2" fill="#333"/></svg>
<svg width="14" height="14" style="left:20px;top:750px"><path d="M0 5h3l4-4v11l-4-4h-3zM9 3l3 3.500-3 3.500" fill="#ccc" stroke="#ccc" stroke-width=".5"/></svg>
<div class="a" style="left:38px;top:752px;width:8px;height:8px;background:#ccc;border-radius:50%"></div>
<svg width="10" height="13" style="left:52px;top:750px"><path d="M2 6v-3a3 3 0 0 1 6 0v3" fill="none" stroke="#ccc" stroke-width="1.500"/><rect x="1" y="6" width="8" height="7" fill="#ccc"/></svg>
<div class="sp" style="left:68px;top:750px;height:12px"></div>
<svg width="14" height="14" style="left:83px;top:750px"><path d="M0 8l8-8h5v5l-8 9z" fill="#ddd"/><circle cx="10" cy="3" r="1" fill="#333"/></svg>
<div class="sp" style="left:101px;top:750px;height:12px"></div>
<div class="t" style="left:106px;top:750px;font-size:10px;color:#aaa">#</div>
<div class="sp" style="left:122px;top:750px;height:12px"></div>
<div class="t" style="left:128px;top:750px;font-size:10px;color:#b0b0b0">Layer Name</div>
<div class="sp" style="left:385px;top:750px;height:12px"></div>
<svg width="13" height="10" style="left:390px;top:751px"><use href="#shy"/></svg>
<svg width="12" height="12" style="left:406px;top:750px"><circle cx="6" cy="6" r="3" fill="#ddd"/><path d="M6 0v12M0 6h12M2 2l8 8M10 2l-8 8" stroke="#ddd" stroke-dasharray="2 2"/></svg>
<svg width="12" height="12" style="left:421px;top:750px"><path d="M1 1l10 10" stroke="#ddd" stroke-dasharray="3 1"/></svg>
<div class="t" style="left:437px;top:750px;font-family:'Liberation Serif',serif;font-style:italic;font-size:15px;color:#aaa">fx</div>
<svg width="12" height="14" style="left:451px;top:749px"><path d="M.5.500h11v13h-11zM3 1v12M9 1v12M3 5h6M3 9h6" fill="none" stroke="#ccc"/></svg>
<svg width="14" height="13" style="left:465px;top:750px"><circle cx="5" cy="8" r="5" fill="#777"/><circle cx="9" cy="5" r="5" fill="#aaa"/></svg>
<svg width="13" height="13" style="left:481px;top:750px"><circle cx="6.500" cy="6.500" r="6" fill="#222" stroke="#ddd"/><path d="M2 11a6 6 0 0 0 9-9z" fill="#ddd"/></svg>
<svg width="12" height="13" style="left:496px;top:750px"><path d="M6 0l6 3v7l-6 3-6-3v-7z" fill="#bbb"/><path d="M0 3l6 3 6-3M6 6v7" stroke="#555" fill="none"/></svg>
<div class="sp" style="left:526px;top:750px;height:12px"></div>
<div class="t" style="left:532px;top:750px;font-size:10px;color:#b0b0b0">Parent</div>
<div class="sp" style="left:643px;top:750px;height:12px"></div>

<div class="a" style="left:0;top:868px;width:660px;height:143px;background:#404040"></div>

<!-- layer rows -->
<div class="lr" style="top:766px"></div>
<div class="b" style="left:5px;top:767px"></div><div class="b" style="left:50px;top:767px"></div>
<div class="r" style="left:74px;top:770px;border-left-color:#999"></div><div class="lb" style="top:769px"></div>
<div class="t n" style="left:107px;top:766px">1</div>
<div class="a" style="left:125px;top:767px;width:13px;height:13px;background:#fff"></div>
<div class="t n" style="left:144px;top:767px;font-size:11.1px">COLOR CONTROLS</div>
<svg width="13" height="10" style="left:390px;top:769px"><use href="#shy"/></svg><div class="b" style="left:405px;top:767px"></div>
<div class="b" style="left:420px;top:767px"></div><svg width="13" height="14" style="left:420px;top:767px"><path d="M1 13l11-12" stroke="#ccc"/></svg>
<div class="fx" style="top:767px">fx</div>
<div class="b" style="left:465px;top:767px"></div><div class="b" style="left:480px;top:767px"></div><div class="b" style="left:495px;top:767px"></div>
<svg width="11" height="11" style="left:533px;top:768px"><use href="#sps"/></svg>
<div class="dd" style="left:550px;top:767px;width:88px;height:14px"></div><div class="t" style="left:557px;top:766px;color:#aaa">None</div><div class="d" style="left:625px;top:772px"></div>

<div class="lr" style="top:783px"></div>
<svg width="13" height="12" style="left:6px;top:785px"><use href="#eye"/></svg><div class="b" style="left:35px;top:784px"></div><div class="b" style="left:50px;top:784px"></div>
<div class="r" style="left:74px;top:787px;border-left-color:#999"></div><div class="lb" style="top:786px"></div>
<div class="t n" style="left:107px;top:783px">2</div>
<div class="a" style="left:125px;top:784px;width:13px;height:13px;background:#0c33f0"></div>
<div class="t n" style="left:144px;top:783px">optical flare Transition 2</div>
<svg width="13" height="10" style="left:390px;top:786px"><use href="#shy"/></svg><div class="b" style="left:405px;top:784px"></div>
<div class="b" style="left:420px;top:784px"></div><svg width="13" height="14" style="left:420px;top:784px"><path d="M1 13l11-12" stroke="#ccc"/></svg>
<div class="fx" style="top:784px">fx</div>
<div class="b" style="left:465px;top:784px"></div><div class="b" style="left:480px;top:784px"></div><div class="b" style="left:495px;top:784px"></div>
<svg width="11" height="11" style="left:533px;top:785px"><use href="#sps"/></svg>
<div class="dd" style="left:550px;top:784px;width:88px;height:14px"></div><div class="t" style="left:557px;top:783px;color:#aaa">None</div><div class="d" style="left:625px;top:789px"></div>

<div class="lr" style="top:800px"></div>
<svg width="13" height="12" style="left:6px;top:802px"><use href="#eye"/></svg><div class="b" style="left:35px;top:801px"></div><div class="b" style="left:50px;top:801px"></div>
<div class="r" style="left:74px;top:804px;border-left-color:#999"></div><div class="lb" style="top:803px"></div>
<div class="t n" style="left:107px;top:800px">3</div>
<div class="a" style="left:125px;top:801px;width:13px;height:13px;background:#0c33f0"></div>
<div class="t n" style="left:144px;top:800px">optical flare Transition 1</div>
<svg width="13" height="10" style="left:390px;top:803px"><use href="#shy"/></svg><div class="b" style="left:405px;top:801px"></div>
<div class="b" style="left:420px;top:801px"></div><svg width="13" height="14" style="left:420px;top:801px"><path d="M1 13l11-12" stroke="#ccc"/></svg>
<div class="fx" style="top:801px">fx</div>
<div class="b" style="left:465px;top:801px"></div><div class="b" style="left:480px;top:801px"></div><div class="b" style="left:495px;top:801px"></div>
<svg width="11" height="11" style="left:533px;top:802px"><use href="#sps"/></svg>
<div class="dd" style="left:550px;top:801px;width:88px;height:14px"></div><div class="t" style="left:557px;top:800px;color:#aaa">None</div><div class="d" style="left:625px;top:806px"></div>

<div class="lr" style="top:817px"></div>
<svg width="13" height="12" style="left:6px;top:819px"><use href="#eye"/></svg><div class="b" style="left:35px;top:818px"></div><div class="b" style="left:50px;top:818px"></div>
<div class="r" style="left:74px;top:821px;border-left-color:#999"></div><div class="lb" style="top:820px"></div>
<div class="t n" style="left:107px;top:817px">4</div>
<svg width="16" height="14" style="left:124px;top:818px"><use href="#comp"/></svg>
<div class="t n" style="left:144px;top:817px">[pass 1]</div>
<svg width="13" height="10" style="left:390px;top:820px"><use href="#shy"/></svg><div class="b" style="left:405px;top:818px"></div>
<div class="b" style="left:420px;top:818px"></div><svg width="13" height="14" style="left:420px;top:818px"><path d="M1 13l11-12" stroke="#ccc"/></svg>
<div class="b" style="left:465px;top:818px"></div><div class="b" style="left:480px;top:818px"></div><div class="b" style="left:495px;top:818px"></div>
<svg width="11" height="11" style="left:533px;top:819px"><use href="#sps"/></svg>
<div class="dd" style="left:550px;top:818px;width:88px;height:14px"></div><div class="t" style="left:557px;top:817px;color:#aaa">None</div><div class="d" style="left:625px;top:823px"></div>

<div class="lr" style="top:834px"></div>
<svg width="13" height="12" style="left:6px;top:836px"><use href="#eye"/></svg><div class="b" style="left:35px;top:835px"></div><div class="b" style="left:50px;top:835px"></div>
<div class="r" style="left:74px;top:838px;border-left-color:#999"></div><div class="lb" style="top:837px"></div>
<div class="t n" style="left:107px;top:834px">5</div>
<svg width="16" height="14" style="left:124px;top:835px"><use href="#comp"/></svg>
<div class="t n" style="left:144px;top:834px">[pass 2]</div>
<svg width="13" height="10" style="left:390px;top:837px"><use href="#shy"/></svg><div class="b" style="left:405px;top:835px"></div>
<div class="b" style="left:420px;top:835px"></div><svg width="13" height="14" style="left:420px;top:835px"><path d="M1 13l11-12" stroke="#ccc"/></svg>
<div class="b" style="left:465px;top:835px"></div><div class="b" style="left:480px;top:835px"></div><div class="b" style="left:495px;top:835px"></div>
<svg width="11" height="11" style="left:533px;top:836px"><use href="#sps"/></svg>
<div class="dd" style="left:550px;top:835px;width:88px;height:14px"></div><div class="t" style="left:557px;top:834px;color:#aaa">None</div><div class="d" style="left:625px;top:840px"></div>

<div class="lr" style="top:851px"></div>
<svg width="13" height="12" style="left:6px;top:853px"><use href="#eye"/></svg><div class="b" style="left:35px;top:852px"></div><div class="b" style="left:50px;top:852px"></div>
<div class="r" style="left:74px;top:855px;border-left-color:#999"></div><div class="lb" style="top:854px"></div>
<div class="t n" style="left:107px;top:851px">6</div>
<svg width="16" height="14" style="left:124px;top:852px"><use href="#comp"/></svg>
<div class="t n" style="left:144px;top:851px">[pass 3]</div>
<svg width="13" height="10" style="left:390px;top:854px"><use href="#shy"/></svg><div class="b" style="left:405px;top:852px"></div>
<div class="b" style="left:420px;top:852px"></div><svg width="13" height="14" style="left:420px;top:852px"><path d="M1 13l11-12" stroke="#ccc"/></svg>
<div class="b" style="left:465px;top:852px"></div><div class="b" style="left:480px;top:852px"></div><div class="b" style="left:495px;top:852px"></div>
<svg width="11" height="11" style="left:533px;top:853px"><use href="#sps"/></svg>
<div class="dd" style="left:550px;top:852px;width:88px;height:14px"></div><div class="t" style="left:557px;top:851px;color:#aaa">None</div><div class="d" style="left:625px;top:857px"></div>

<!-- timeline right -->
<div class="a" style="left:660px;top:710px;width:184px;height:7px;background:#404040"></div>
<div class="a" style="left:660px;top:717px;width:1184px;height:9px;background:#777;border-top:1px solid #222;border-bottom:1px solid #111"></div>
<div class="a" style="left:660px;top:717px;width:7px;height:8px;background:#b8860b"></div>
<div class="a" style="left:1837px;top:717px;width:7px;height:9px;background:#b8860b"></div>
<div class="a" style="left:660px;top:726px;width:1184px;height:20px;background:#404040;border-bottom:1px solid #111;overflow:hidden"></div>
<div class="a" style="left:667px;top:741px;width:1172px;height:4px;background:repeating-linear-gradient(90deg,#bbb 0 1px,transparent 1px 53.2px)"></div>
<div class="a" style="left:660px;top:726px;width:184px;height:15px;overflow:hidden"><div class="tl" style="left:-15px;top:1px">00000</div></div>
<div class="tl" style="left:698px">00025</div><div class="tl" style="left:751px">00050</div><div class="tl" style="left:805px">00075</div><div class="tl" style="left:858px">00100</div><div class="tl" style="left:911px">00125</div><div class="tl" style="left:964px">00150</div><div class="tl" style="left:1017px">00175</div><div class="tl" style="left:1071px">00200</div><div class="tl" style="left:1124px">00225</div><div class="tl" style="left:1177px">00250</div><div class="tl" style="left:1230px">00275</div><div class="tl" style="left:1283px">00300</div><div class="tl" style="left:1337px">00325</div><div class="tl" style="left:1390px">00350</div><div class="tl" style="left:1443px">00375</div><div class="tl" style="left:1496px">00400</div><div class="tl" style="left:1549px">00425</div><div class="tl" style="left:1603px">00450</div><div class="tl" style="left:1656px">00475</div><div class="tl" style="left:1709px">00500</div><div class="tl" style="left:1762px">00525</div>
<div class="a" style="left:1815px;top:726px;width:29px;height:15px;overflow:hidden"><div class="tl" style="left:0;top:1px">00550</div></div>
<div class="a" style="left:660px;top:746px;width:1184px;height:16px;background:#6f6f6f;border-bottom:1px solid #111"></div>
<div class="a" style="left:661px;top:746px;width:6px;height:15px;background:#b8860b;border-left:1px solid #111;border-right:1px solid #111"></div>
<div class="a" style="left:1838px;top:746px;width:6px;height:15px;background:#b8860b"></div>
<svg width="10" height="11" style="left:1830px;top:750px"><path d="M5 0l5 5v6h-10v-6z" fill="#999" stroke="#ddd"/></svg>
<div class="a" style="left:660px;top:762px;width:1184px;height:4px;background:#333;border-top:1px solid #222"></div>
<div class="a" style="left:660px;top:766px;width:1176px;height:245px;background:#4d4d4d"></div>
<div class="a" style="left:660px;top:766px;width:1176px;height:102px;background:#474747"></div>
<div class="a" style="left:660px;top:868px;width:7px;height:143px;background:#464646"></div>
<div class="a" style="left:660px;top:766px;width:7px;height:102px;background:#3b3b3b"></div>
<div class="a" style="left:659px;top:710px;width:1px;height:302px;background:#202020"></div>
<div class="a" style="left:1836px;top:766px;width:8px;height:245px;background:#464646"></div>
<div class="tr" style="top:766px;background:#525252"></div>
<div class="a" style="left:1131px;top:783px;width:224px;height:16px;background:#525252;border-top:1px solid #666;border-left:1px solid #666"></div>
<div class="a" style="left:854px;top:800px;width:225px;height:16px;background:#525252;border-top:1px solid #666;border-left:1px solid #666"></div>
<svg width="12" height="11" style="left:1233px;top:789px"><path d="M6 .5l5 5v5h-10v-5z" fill="#888" stroke="#ddd"/></svg>
<svg width="12" height="11" style="left:957px;top:806px"><path d="M6 .5l5 5v5h-10v-5z" fill="#888" stroke="#ddd"/></svg>
<div class="a" style="left:667px;top:817px;width:318px;height:16px;background:#525252;border-top:1px solid #666;border-left:1px solid #666"></div>
<div class="a" style="left:985px;top:817px;width:859px;height:16px;background:#434343;border-top:1px solid #5f5f5f;border-bottom:1px solid #5f5f5f"></div>
<div class="a" style="left:829px;top:834px;width:91px;height:16px;background:#404040;border:1px solid #5a5a5a"></div>
<div class="a" style="left:920px;top:834px;width:333px;height:16px;background:#525252;border-top:1px solid #666;border-left:1px solid #666"></div>
<div class="a" style="left:1253px;top:834px;width:591px;height:16px;background:#434343;border-top:1px solid #5f5f5f;border-bottom:1px solid #5f5f5f"></div>
<div class="a" style="left:1095px;top:851px;width:112px;height:16px;background:#404040;border:1px solid #5a5a5a"></div>
<div class="a" style="left:1207px;top:851px;width:629px;height:16px;background:#525252;border-top:1px solid #666;border-left:1px solid #666"></div>
<div class="a" style="left:1609px;top:717px;width:1px;height:294px;background:#f01212"></div>
<svg width="12" height="16" style="left:1604px;top:732px"><path d="M1 0h10v8l-5 7-5-7z" fill="#e6aa00"/><path d="M3.500 2v3M6 2v3M8.500 2v3M6 6v8" stroke="#222"/></svg>
<div class="a" style="left:1844px;top:710px;width:16px;height:301px;background:#3a3a3a;border-left:1px solid #262626"></div>
<svg width="12" height="16" style="left:1846px;top:747px"><path d="M.5.500h10v10l-5 5-5-5z" fill="#888" stroke="#ccc"/></svg>
<svg width="14" height="14" style="left:1846px;top:769px"><circle cx="5" cy="6" r="5" fill="#555" stroke="#aaa"/><rect x="6" y="4" width="7" height="7" fill="#333" stroke="#ccc"/><path d="M3 14l2-5 2 5z" fill="#ccc"/></svg>
<div class="a" style="left:1844px;top:784px;width:16px;height:1px;background:#262626"></div>
<div class="a" style="left:1847px;top:788px;border:5px solid transparent;border-bottom:7px solid #5e5e5e;border-top:0"></div>
<div class="d" style="left:1847px;top:999px;border-width:7px 5px 0;border-top-color:#5e5e5e"></div>

<!-- timeline footer -->
<div class="a" style="left:0;top:1011px;width:1860px;height:17px;background:#3b3b3b;border-top:1px solid #252525"></div>
<div class="a" style="left:0;top:1028px;width:1860px;height:3px;background:#1f2a30"></div>
<svg width="48" height="14" style="left:5px;top:1013px"><path d="M1 1h9v9h-9zM3 3h10v10h-10z" fill="#555" stroke="#ccc"/><circle cx="26" cy="6" r="5" fill="none" stroke="#ccc"/><rect x="25" y="6" width="7" height="7" fill="#555" stroke="#ccc"/><path d="M44 1l-2 3 2 3-2 3 2 3M47 1l2 3-2 3 2 3-2 3" stroke="#ccc" fill="none"/></svg>
<div class="a" style="left:388px;top:1014px;width:137px;height:14px;background:#484848;border:1px solid #222"></div>
<div class="t" style="left:388px;top:1014px;width:137px;text-align:center;color:#bbb;font-size:10.5px">Toggle Switches / Modes</div>
<svg width="96" height="12" style="left:665px;top:1016px"><path d="M1 10l4-4 4 4z" fill="none" stroke="#ccc"/><path d="M22 8h44" stroke="#222" stroke-width="3"/><path d="M22 3h5l2 3v5h-7z" fill="#888" stroke="#ccc"/><path d="M96 10h-14l7-7z" fill="#aaa"/></svg>
<div class="a" style="left:773px;top:1014px;border:5px solid transparent;border-right:6px solid #777;border-left:0"></div>
<div class="r" style="left:1832px;top:1014px;border-width:5px 0 5px 6px;border-left-color:#666"></div>

<!-- relink dialog -->
<div class="a" style="left:733px;top:368px;width:402px;height:327px;background:#1e1f22;border:1px solid #55575a;box-shadow:0 2px 8px rgba(0,0,0,.6)"></div>
<div class="a" style="left:734px;top:369px;width:400px;height:25px;background:#fff"></div>
<div class="t" style="left:737px;top:375px;color:#8c8c8c;font-size:11.2px">Relink Scene Files</div>
<svg width="12" height="12" style="left:1113px;top:375px"><path d="M.5.500l10 10M10.500.500l-10 10" stroke="#777"/></svg>
<div class="t h" style="left:750px;top:405px">Missing Files</div>
<div class="a" style="left:749px;top:424px;width:371px;height:1px;background:#4c4c4c"></div>
<div class="btn" style="left:754px;top:429px;width:90px;height:25px;line-height:24px;font-size:12px">File List</div>
<div class="t" style="left:864px;top:435px;font-size:10.2px;color:#b0b0b0"><b>0</b> Models</div>
<div class="t" style="left:944px;top:435px;font-size:10.2px;color:#b0b0b0"><b>1</b> Textures</div>
<div class="t h" style="left:750px;top:465px">Search Location</div>
<div class="a" style="left:749px;top:484px;width:371px;height:1px;background:#4c4c4c"></div>
<div class="btn" style="left:754px;top:489px;width:90px;height:25px;line-height:24px;font-size:11.8px;padding-left:2px">Select Folder</div>
<div class="t" style="left:754px;top:529px;font-size:10px;color:#b0b0b0">Search Depth</div>
<div class="t" style="left:824px;top:528px;font-size:10.5px;color:#5aa9e6;border-bottom:1px dotted #5aa9e6">5</div>
<div class="t h" style="left:750px;top:555px">Options</div>
<div class="a" style="left:749px;top:574px;width:371px;height:1px;background:#4c4c4c"></div>
<div class="a" style="left:754px;top:582px;width:14px;height:14px;background:#7de9f2;border:2px solid #2b5f7a"></div>
<div class="t o" style="left:774px;top:581px">Relink Models</div>
<div class="a" style="left:754px;top:604px;width:14px;height:14px;background:#7de9f2;border:2px solid #2b5f7a"></div>
<div class="t o" style="left:774px;top:603px">Relink Materials</div>
<div class="a" style="left:754px;top:626px;width:14px;height:14px;background:#7de9f2;border:2px solid #2b5f7a"></div>
<div class="t o" style="left:774px;top:625px">Relink Missing Only</div>
<div class="a" style="left:734px;top:652px;width:400px;height:1px;background:#4c4c4c"></div>
<div class="btn" style="left:869px;top:659px;width:120px;height:30px;line-height:29px;font-size:12px">Close</div>
<div class="btn" style="left:999px;top:659px;width:120px;height:30px;line-height:29px;font-size:12px">Relink</div>

<!-- browse dialog -->
<div class="a" style="left:1147px;top:322px;width:326px;height:392px;background:#f0f0f0;border:1px solid #9a9a9a;box-shadow:0 2px 8px rgba(0,0,0,.5)"></div>
<div class="a" style="left:1148px;top:323px;width:324px;height:30px;background:#fff"></div>
<div class="t" style="left:1155px;top:332px;color:#8c8c8c;font-size:11.5px">Browse For Folder</div>
<svg width="12" height="12" style="left:1453px;top:331px"><path d="M.5.500l10 10M10.500.500l-10 10" stroke="#777"/></svg>
<div class="t" style="left:1161px;top:365px;color:#111;font-size:11px">Search Path</div>
<div class="a" style="left:1162px;top:410px;width:296px;height:220px;background:#fff;border:1px solid #6a6a6a"></div>
<div class="a" style="left:1163px;top:411px;width:278px;height:201px;overflow:hidden">
<div class="a" style="left:93px;top:0;width:54px;height:20px;background:#d9d9d9"></div>
<svg width="13" height="16" style="left:97px;top:2px"><use href="#wf"/></svg><div class="fr" style="left:116px;top:0">Logo</div>
<svg width="13" height="16" style="left:116px;top:22px"><use href="#wf"/></svg><div class="fr" style="left:135px;top:20px">demo logo</div>
<svg width="13" height="16" style="left:116px;top:42px"><use href="#wf"/></svg><div class="fr" style="left:135px;top:40px">files</div>
<svg width="13" height="16" style="left:116px;top:62px"><use href="#wf"/></svg><div class="fr" style="left:135px;top:60px">instruction</div>
<svg width="13" height="16" style="left:78px;top:82px"><use href="#wf"/></svg><div class="fr" style="left:97px;top:80px">STARS</div>
<svg width="13" height="16" style="left:78px;top:102px"><use href="#wf"/></svg><div class="fr" style="left:97px;top:100px">Transitions</div>
<svg width="13" height="16" style="left:78px;top:122px"><use href="#wf"/></svg><div class="fr" style="left:97px;top:120px">videohive-5624493-cinematic-logo-reveal</div>
<svg width="13" height="16" style="left:78px;top:142px"><use href="#wf"/></svg><div class="fr" style="left:97px;top:140px">videohive-6735223-butterfly-logo-reveal</div>
<svg width="13" height="16" style="left:78px;top:162px"><use href="#wf"/></svg><div class="fr" style="left:97px;top:160px">Vortex Loop</div>
<svg width="13" height="16" style="left:59px;top:182px"><use href="#wf"/></svg><div class="fr" style="left:78px;top:180px">WindowsImageBackup</div>
<svg width="90" height="200" style="left:40px;top:0"><path d="M38 8l5 5 5-5" fill="none" stroke="#444" stroke-width="1.600"/><path d="M22 84l4 5-4 5M22 124l4 5-4 5M22 144l4 5-4 5M3 184l4 5-4 5" fill="none" stroke="#a6a6a6" stroke-width="1.600"/></svg>
</div>
<div class="a" style="left:1441px;top:411px;width:16px;height:202px;background:#f0f0f0"></div>
<div class="a" style="left:1441px;top:548px;width:16px;height:26px;background:#c9c9c9"></div>
<svg width="12" height="8" style="left:1443px;top:417px"><path d="M1 6l5-5 5 5" fill="none" stroke="#555" stroke-width="1.500"/></svg>
<svg width="12" height="8" style="left:1443px;top:600px"><path d="M1 1l5 5 5-5" fill="none" stroke="#555" stroke-width="1.500"/></svg>
<div class="a" style="left:1163px;top:613px;width:294px;height:16px;background:#f0f0f0"></div>
<div class="a" style="left:1180px;top:613px;width:195px;height:16px;background:#c9c9c9"></div>
<svg width="8" height="12" style="left:1168px;top:615px"><path d="M6 1l-5 5 5 5" fill="none" stroke="#555" stroke-width="1.500"/></svg>
<svg width="8" height="12" style="left:1428px;top:615px"><path d="M1 1l5 5-5 5" fill="none" stroke="#555" stroke-width="1.500"/></svg>
<div class="t" style="left:1161px;top:649px;color:#111;font-size:11.2px">Folder:</div>
<div class="a" style="left:1215px;top:643px;width:244px;height:23px;background:#fff;border:1px solid #7a7a7a"></div>
<div class="t" style="left:1220px;top:646px;color:#111;font-size:12px">Logo</div>
<div class="wb" style="left:1163px;top:680px;width:103px;height:21px;font-size:10.5px">Make New Folder</div>
<div class="wb" style="left:1303px;top:680px;width:73px;height:21px">OK</div>
<div class="wb" style="left:1384px;top:680px;width:73px;height:21px">Cancel</div>
<svg width="10" height="10" style="left:1462px;top:703px"><path d="M7 0h2v2h-2zM4 3h2v2h-2zM7 3h2v2h-2zM1 6h2v2h-2zM4 6h2v2h-2zM7 6h2v2h-2z" fill="#bbb"/></svg>
</body></html>
